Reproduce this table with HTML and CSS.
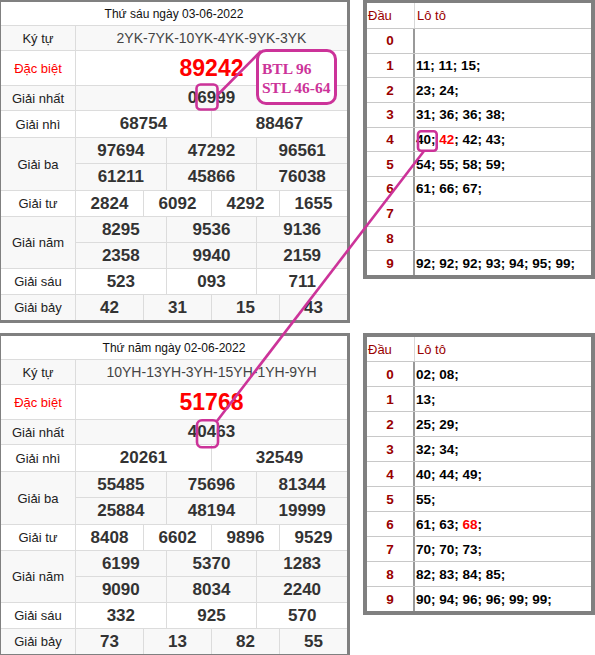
FILE: index.html
```html
<!DOCTYPE html>
<html lang="vi">
<head>
<meta charset="utf-8">
<title>Kết quả xổ số</title>
<link rel="stylesheet" href="styles.css">
</head>
<body>
<div class="page">
  <div class="kq">
    <div class="row"><div class="head s13">Thứ sáu ngày 03-06-2022</div></div>
    <div class="row alt"><div class="lbl">Ký tự</div><div class="kytu s12">2YK-7YK-10YK-4YK-9YK-3YK</div></div>
    <div class="row"><div class="lbl red">Đặc biệt</div><div class="db s12">89242</div></div>
    <div class="row alt"><div class="lbl">Giải nhất</div><div class="num s12">06999</div></div>
    <div class="row"><div class="lbl">Giải nhì</div><div class="num s6">68754</div><div class="num s6">88467</div></div>
    <div class="row alt"><div class="lbl r2">Giải ba</div><div class="num s4">97694</div><div class="num s4">47292</div><div class="num s4">96561</div></div>
    <div class="row alt"><div class="num s4">61211</div><div class="num s4">45866</div><div class="num s4">76038</div></div>
    <div class="row"><div class="lbl">Giải tư</div><div class="num s3">2824</div><div class="num s3">6092</div><div class="num s3">4292</div><div class="num s3">1655</div></div>
    <div class="row alt"><div class="lbl r2">Giải năm</div><div class="num s4">8295</div><div class="num s4">9536</div><div class="num s4">9136</div></div>
    <div class="row alt"><div class="num s4">2358</div><div class="num s4">9940</div><div class="num s4">2159</div></div>
    <div class="row"><div class="lbl">Giải sáu</div><div class="num s4">523</div><div class="num s4">093</div><div class="num s4">711</div></div>
    <div class="row alt"><div class="lbl">Giải bảy</div><div class="num s3">42</div><div class="num s3">31</div><div class="num s3">15</div><div class="num s3">43</div></div>
  </div>

  <div class="lt lt-first">
    <div class="row hrow"><div class="hd">Đầu</div><div class="hl">Lô tô</div></div>
    <div class="row"><div class="dau">0</div><div class="val"><span></span></div></div>
    <div class="row"><div class="dau">1</div><div class="val"><span>11; 11; 15;</span></div></div>
    <div class="row"><div class="dau">2</div><div class="val"><span>23; 24;</span></div></div>
    <div class="row"><div class="dau">3</div><div class="val"><span>31; 36; 36; 38;</span></div></div>
    <div class="row"><div class="dau">4</div><div class="val"><span>40; <b class="hot">42</b>; 42; 43;</span></div></div>
    <div class="row"><div class="dau">5</div><div class="val"><span>54; 55; 58; 59;</span></div></div>
    <div class="row"><div class="dau">6</div><div class="val"><span>61; 66; 67;</span></div></div>
    <div class="row"><div class="dau">7</div><div class="val"><span></span></div></div>
    <div class="row"><div class="dau">8</div><div class="val"><span></span></div></div>
    <div class="row"><div class="dau">9</div><div class="val"><span>92; 92; 92; 93; 94; 95; 99;</span></div></div>
  </div>

  <div class="kq kq-second">
    <div class="row"><div class="head s13">Thứ năm ngày 02-06-2022</div></div>
    <div class="row alt"><div class="lbl">Ký tự</div><div class="kytu s12">10YH-13YH-3YH-15YH-1YH-9YH</div></div>
    <div class="row"><div class="lbl red">Đặc biệt</div><div class="db s12">51768</div></div>
    <div class="row alt"><div class="lbl">Giải nhất</div><div class="num s12">40463</div></div>
    <div class="row"><div class="lbl">Giải nhì</div><div class="num s6">20261</div><div class="num s6">32549</div></div>
    <div class="row alt"><div class="lbl r2">Giải ba</div><div class="num s4">55485</div><div class="num s4">75696</div><div class="num s4">81344</div></div>
    <div class="row alt"><div class="num s4">25884</div><div class="num s4">48194</div><div class="num s4">19999</div></div>
    <div class="row"><div class="lbl">Giải tư</div><div class="num s3">8408</div><div class="num s3">6602</div><div class="num s3">9896</div><div class="num s3">9529</div></div>
    <div class="row alt"><div class="lbl r2">Giải năm</div><div class="num s4">6199</div><div class="num s4">5370</div><div class="num s4">1283</div></div>
    <div class="row alt"><div class="num s4">9090</div><div class="num s4">8034</div><div class="num s4">2240</div></div>
    <div class="row"><div class="lbl">Giải sáu</div><div class="num s4">332</div><div class="num s4">925</div><div class="num s4">570</div></div>
    <div class="row alt"><div class="lbl">Giải bảy</div><div class="num s3">73</div><div class="num s3">13</div><div class="num s3">82</div><div class="num s3">55</div></div>
  </div>

  <div class="lt lt-second">
    <div class="row hrow"><div class="hd">Đầu</div><div class="hl">Lô tô</div></div>
    <div class="row"><div class="dau">0</div><div class="val"><span>02; 08;</span></div></div>
    <div class="row"><div class="dau">1</div><div class="val"><span>13;</span></div></div>
    <div class="row"><div class="dau">2</div><div class="val"><span>25; 29;</span></div></div>
    <div class="row"><div class="dau">3</div><div class="val"><span>32; 34;</span></div></div>
    <div class="row"><div class="dau">4</div><div class="val"><span>40; 44; 49;</span></div></div>
    <div class="row"><div class="dau">5</div><div class="val"><span>55;</span></div></div>
    <div class="row"><div class="dau">6</div><div class="val"><span>61; 63; <b class="hot">68</b>;</span></div></div>
    <div class="row"><div class="dau">7</div><div class="val"><span>70; 70; 73;</span></div></div>
    <div class="row"><div class="dau">8</div><div class="val"><span>82; 83; 84; 85;</span></div></div>
    <div class="row"><div class="dau">9</div><div class="val"><span>90; 94; 96; 96; 99; 99;</span></div></div>
  </div>

  <div class="note">BTL 96<br>STL 46-64</div>

  <svg class="marks" width="595" height="655" viewBox="0 0 595 655" aria-hidden="true">
    <rect x="196.5" y="84.5" width="21" height="25" rx="4"/>
    <line x1="261" y1="51" x2="218.5" y2="94"/>
    <rect x="418" y="131.3" width="18.7" height="19.4" rx="3"/>
    <line x1="424" y1="151" x2="217" y2="421"/>
    <rect x="197" y="420.3" width="21" height="27" rx="5"/>
  </svg>
</div>
</body>
</html>
```

FILE: styles.css
```css
* { box-sizing: border-box; }
html, body { margin: 0; padding: 0; background: #fff; }
body {
  font-family: "Liberation Sans", Arial, sans-serif;
  color: #222;
}

.page {
  position: relative;
  width: 595px;
  height: 655px;
  overflow: hidden;
  display: grid;
  grid-template-columns: 350px 232px;
  column-gap: 13px;
  row-gap: 10px;
  align-items: start;
  align-content: start;
}

/* Results table */
.kq {
  display: grid;
  grid-template-columns: 74px repeat(12, 1fr);
  grid-template-rows: 23px 24px 34px 24px 26px 25px 26px 25px 25px 25px 25px 25px;
  gap: 1px;
  background: #dcdcdc;
  border: solid #808080;
  border-width: 2px 3px 3px 1px;
}
.kq-second { border-top-width: 3px; }

.row { display: contents; }

.kq .row > div {
  background: #fff;
  display: flex;
  align-items: center;
  justify-content: center;
  white-space: nowrap;
}
.kq .row.alt > div { background: #f8f8f8; }

.s13 { grid-column: span 13; }
.s12 { grid-column: span 12; }
.s6 { grid-column: span 6; }
.s4 { grid-column: span 4; }
.s3 { grid-column: span 3; }
.r2 { grid-row: span 2; }

.head { font-size: 12px; color: #111; }
.lbl { font-size: 13px; color: #222; }
.lbl.red { color: #ff0000; }
.kytu { font-size: 14px; color: #444; }
.db { font-size: 23px; font-weight: bold; color: #ff0000; }
.num { font-size: 17px; font-weight: bold; color: #333; }

/* Loto table */
.lt {
  display: grid;
  grid-template-columns: 48px 1fr;
  grid-template-rows: 25px;
  grid-auto-rows: 24px;
  row-gap: 1px;
  background: #c8c8c8;
  border: 4px solid #808080;
}
.lt-first { border-top-width: 3px; grid-auto-rows: 23.7px; }
.lt-second { grid-template-rows: 24px; }

.lt .row > div {
  background: #fff;
  display: flex;
  align-items: center;
  white-space: nowrap;
}
.lt .hd {
  font-size: 13px;
  color: #990000;
  padding-left: 1px;
  border-right: 1px solid #d8d8d8;
}
.lt .hl {
  font-size: 13px;
  color: #990000;
  padding-left: 2px;
}
.lt .dau {
  justify-content: center;
  font-size: 13.5px;
  font-weight: bold;
  color: #990000;
  border-right: 2px solid #999;
}
.lt .val {
  font-size: 13.5px;
  font-weight: bold;
  color: #000;
  padding-left: 1px;
}
.hot { color: #ff0000; }

/* Overlays */
.note {
  position: absolute;
  left: 256px;
  top: 49px;
  width: 81px;
  height: 56px;
  border: 3px solid #cc3399;
  border-radius: 10px;
  background: #fff;
  padding: 8px 0 0 3px;
  font-family: "Liberation Serif", "Times New Roman", serif;
  font-weight: bold;
  font-size: 15.5px;
  line-height: 18.5px;
  color: #cc3399;
  white-space: nowrap;
}

.marks {
  position: absolute;
  left: 0;
  top: 0;
  pointer-events: none;
  fill: none;
  stroke: #cc3399;
  stroke-width: 2.6;
}
```
